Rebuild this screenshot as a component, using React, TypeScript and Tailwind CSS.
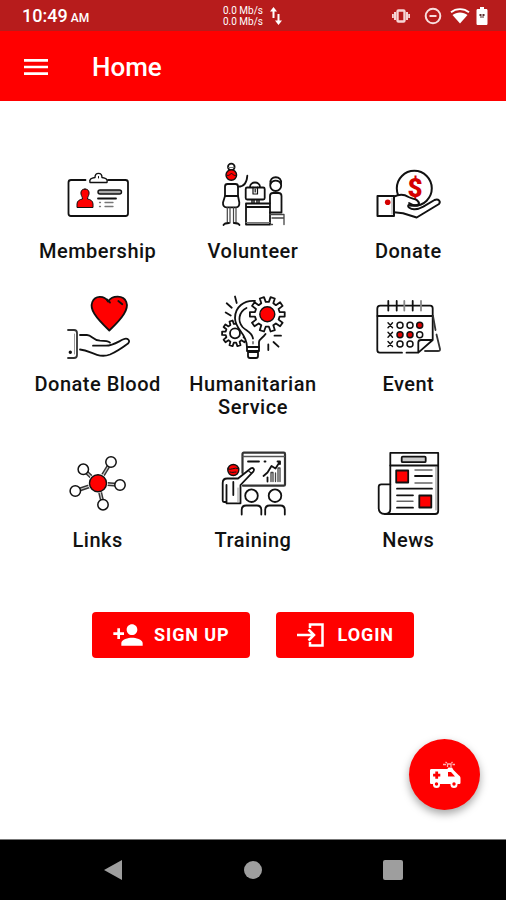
import type { ReactNode } from 'react';
import { MdMenu, MdPersonAdd } from 'react-icons/md';

const RED = '#ff0000';

function gearPath(cx: number, cy: number, outer: number, inner: number, teeth: number) {
  const step = (Math.PI * 2) / teeth;
  const points: string[] = [];
  for (let i = 0; i < teeth; i++) {
    const a = i * step;
    const corners = [
      [inner, -0.3],
      [outer, -0.2],
      [outer, 0.2],
      [inner, 0.3],
    ];
    for (const [r, k] of corners) {
      const x = cx + r * Math.cos(a + k * step);
      const y = cy + r * Math.sin(a + k * step);
      points.push(`${x.toFixed(1)} ${y.toFixed(1)}`);
    }
  }
  return `M${points.join('L')}Z`;
}

function Drawing({ children }: { children: ReactNode }) {
  return (
    <svg
      viewBox="0 0 70 70"
      className="size-[70px]"
      fill="none"
      stroke="#111"
      strokeWidth="1.8"
      strokeLinecap="round"
      strokeLinejoin="round"
      aria-hidden="true"
    >
      {children}
    </svg>
  );
}

function MembershipIcon() {
  return (
    <Drawing>
      <path d="M22.5 18H8a2.5 2.5 0 0 0-2.5 2.5v31A2.5 2.5 0 0 0 8 54h54.5a2.5 2.5 0 0 0 2.5-2.5v-31a2.5 2.5 0 0 0-2.5-2.5H45" />
      <path d="M27 20.5c-1-3 1-4.5 5-5 0-5.5 7-5.5 7 0 4 .5 6 2 5 5Z" strokeWidth="1.4" />
      <path d="M35.5 14.5v1.5" strokeWidth="1" />
      <path
        d="M22 27c3 0 4.5 2 4 5-.3 2-1.500 3-1.500 5 3 .5 5.500 2 5.500 5v3.500H14V42c0-3 2.500-4.500 5.500-5 0-2-1.200-3-1.500-5-.5-3 1-5 4-5Z"
        fill={RED}
        strokeWidth="1"
      />
      <rect x="35" y="28" width="23.5" height="4" rx="2" fill="#aaa" strokeWidth="1.4" />
      <path d="M35 36.5h18" />
      <path d="M36.5 40.5h1M42 40.5h8M36.5 44.5h1M42 44.5h8" stroke="#777" strokeWidth="1.3" />
    </Drawing>
  );
}

function VolunteerIcon() {
  return (
    <Drawing>
      <circle cx="13.3" cy="5" r="3.3" />
      <path d="M10.5 5.500h5.500" stroke="#777" strokeWidth="1" />
      <circle cx="13.3" cy="13" r="5.3" fill={RED} strokeWidth="1.4" />
      <path d="M9.5 13.5c2 .5 3-2 4-2s2 2.500 4 2" strokeWidth="1" />
      <path d="M7 34v-9.500c0-1.500 1-2.500 2.500-2.500h8c1.500 0 2.500 1 2.500 2.500V34" />
      <path d="M7 34h13l1.300 6.500c.2 3-.8 4.800-3.300 4.800H8.500c-2.500 0-3.700-1.800-3.500-4.800Z" />
      <path d="M9.3 45.5V61M12 45.5V61M15.5 45.5V61M18 45.5V61" stroke="#444" strokeWidth="1.2" />
      <path d="M5.5 63c1-1.800 2.500-2 5.500-2M21.5 63c-1-1.800-2.500-2-5.500-2" />
      <path d="M20.3 24.7c5 0 8.500-4 9-11" />
      <rect x="27.7" y="25.5" width="19" height="12" rx="1.5" />
      <path d="M32 25c0-6 10-6 10 0" />
      <path d="M35 25v7h4.500v-7M37.200 27v3" strokeWidth="1.2" />
      <path d="M34 38v3M36 38v3M39 38v3M41 38v3" strokeWidth="1.4" />
      <path d="M28 41.5h24V45H28zM28 45v17.500h24V45" />
      <path d="M28 60.5h24" stroke="#777" strokeWidth="1" />
      <circle cx="57.7" cy="23.5" r="5.5" />
      <path d="M52.5 22c-2-9 12.500-9 10.500 0-2-4.500-8.500-4.500-10.500 0Z" fill="#fff" />
      <path d="M52 41v-7c0-2 1-3 3-3h5.500c2 0 3 1 3 3v16.500H52" />
      <path d="M52 52.5h14v10M54 56h12M52.500 62.500h2" stroke="#444" strokeWidth="1.3" />
    </Drawing>
  );
}

function DonateIcon() {
  return (
    <Drawing>
      <circle cx="41.3" cy="26.3" r="17.5" strokeWidth="2" />
      <text
        x="42"
        y="35"
        textAnchor="middle"
        fontFamily="Roboto, sans-serif"
        fontSize="26"
        fontWeight="900"
        fill="#d50000"
        stroke="none"
      >
        $
      </text>
      <path
        d="M21 34.700c5-2.500 10-2.500 14.500.3 4.500 2.500 10.500 1.500 10.500 7.500-3 1.500-6 .5-10.500.5-1.500 2 2 4 5.500 4.300 3 .2 6-.8 9.300-2.600L61.500 38c4-1.800 6.500 1.500 4.500 4L43.700 55.500 30 51.300l-9-1"
        fill="#fff"
        strokeWidth="2"
      />
      <path d="M36 41c3 2 7 3.500 10.500 2" />
      <rect x="4.5" y="34" width="16.5" height="20" fill="#fff" strokeWidth="2" />
      <path d="M19 36v16" stroke="#999" strokeWidth="1" />
      <circle cx="14.7" cy="40.3" r="2.8" fill="#d50000" stroke="none" />
    </Drawing>
  );
}

function DonateBloodIcon() {
  return (
    <Drawing>
      <path
        d="M45 6.500C41 0 32 .5 29.300 7 26.500 14 32 22 46.300 35.500 60 22.500 66 14 63.300 7 60.500 0 49.500 0 45 6.500Z"
        fill={RED}
      />
      <path d="M44 4.5l3 3M55.300 6l4 3.300" />
      <path d="M5 35h6c2 0 3 1 3 3v22c0 2-1 3-3 3H5" stroke="#333" />
      <path d="M11.5 39v20" stroke="#999" strokeWidth="1" />
      <circle cx="7.3" cy="57.3" r=".8" fill="#111" />
      <path d="M17 40h7c5 0 6 5.500 13 5.700 4 0 8 0 10 2" />
      <path d="M30 50.7h13c7 0 12-4 17.500-6.500 4-1.800 7.500 1.300 4.500 4.300C59 53 53 57 47 59.500c-4 1.500-9 1.500-13 .3-6-1.800-10-4.800-17-5.300" />
    </Drawing>
  );
}

function HumanitarianIcon() {
  return (
    <Drawing>
      <path d={gearPath(17, 38.3, 13, 9.5, 10)} />
      <circle cx="17" cy="38.3" r="5" />
      <path
        d="M37 6C26 5 17 12 17 23c0 12 12 14 12 29h12v-6c0-3 4-4 6.500-8L49 19Z"
        fill="#fff"
        stroke="none"
      />
      <path d="M37 6C26 5 17 12 17 23c0 12 12 15 12 29M41 52v-5c0-3 4-4 6.500-8" />
      <path d="M28.500 13c-8 4-9 13-4 19 3.500 4 9 4 10.500 11.500" />
      <path d="M35 47v1.500" stroke="#777" />
      <path d={gearPath(49.3, 19.3, 17.5, 12.5, 10)} fill="#fff" />
      <circle cx="49.3" cy="19.3" r="7.5" fill={RED} strokeWidth="1.4" />
      <path d="M29 52h12v4H29zM30 57h10v4c0 1.300-.7 2-2 2h-6c-1.300 0-2-.7-2-2Z" />
      <path d="M7.700 17.500l5 3M8.700 8.300l5 4.400M17 1.500l1.700 6.500M56.500 40.700H63M55.500 47l5 4.700M50.300 49.500V55" />
    </Drawing>
  );
}

function EventIcon() {
  const columns = [27, 37, 46.7];
  const rows = [30.3, 39.7, 49];
  const marked = ['0-2', '1-0', '1-1'];
  return (
    <Drawing>
      <path d="M59.700 45V13.500c0-2-1-2.800-2.500-2.800H7.300c-2 0-3 1-3 3V55c0 2 .8 2.700 2.500 2.700H29M33.500 57.700h11.800L59.700 45H48c-2 0-2.700.7-2.700 2.500v10.200" />
      <path d="M4.500 21h55" />
      <path d="M15.300 6v9.500M23.700 6v9.500M39.700 6v9.500" />
      <path d="M31.300 6v9.500M48 6v9.500" stroke="#888" />
      <path d="M60 21l2.500 14M63.500 39.500L67 54c.2 1.500-.5 2-2 2H52" stroke="#333" />
      {rows.map((y, r) => (
        <g key={y}>
          <path d={`M15 ${y - 2.5}l4.500 5m0-5l-4.500 5`} strokeWidth="1.4" />
          {columns.map((x, c) => (
            <circle
              key={x}
              cx={x}
              cy={y}
              r={r === 2 && c === 2 ? 0 : 3}
              fill={marked.includes(`${r}-${c}`) ? '#e00000' : '#fff'}
              strokeWidth={r === 2 && c === 2 ? 0 : 1.5}
            />
          ))}
        </g>
      ))}
    </Drawing>
  );
}

function LinksIcon() {
  const nodes = [
    [20.3, 18.3],
    [48, 11],
    [57, 34],
    [40, 53.7],
    [12.3, 40],
  ];
  return (
    <Drawing>
      {nodes.map(([x, y]) => (
        <g key={x}>
          <path d={`M35 32.3L${x} ${y}`} strokeWidth="4" stroke="#333" strokeLinecap="butt" />
          <path d={`M35 32.3L${x} ${y}`} strokeWidth="1.2" stroke="#ccc" strokeLinecap="butt" />
          <circle cx={x} cy={y} r="5.2" fill="#fff" strokeWidth="1.5" />
        </g>
      ))}
      <circle cx="35" cy="32.3" r="10" fill="#fff" stroke="none" />
      <circle cx="35" cy="32.3" r="8.5" fill={RED} strokeWidth="1.4" />
    </Drawing>
  );
}

function TrainingIcon() {
  return (
    <Drawing>
      <path d="M24.500 22V3c0-1 .5-1.300 1.300-1.300h40c.8 0 1.200.5 1.200 1.300v30.500c0 .8-.4 1.200-1.200 1.200H25" stroke="#333" strokeWidth="2.2" />
      <path d="M25 5.5h41.500" stroke="#555" strokeWidth="1.3" />
      <path d="M30 10.5h11M46.500 10.500h1" />
      <path d="M45.500 25l4-3.500L53.500 15l4 2.500L62 10.500M59.500 10.500H62V13" />
      <path d="M49.500 30.5v-4" />
      <path d="M53 30.5v-9h2v9M57.500 30.5V22M60 30.5V17h2v13.500" stroke="#444" strokeWidth="1.3" />
      <circle cx="15.3" cy="19" r="5.5" fill={RED} strokeWidth="1.4" />
      <path d="M10 18c3 1.500 6-2 10.500-.5M12 21c2 1 4 0 6 0" strokeWidth="1" />
      <path
        d="M8 51h-2c-1 0-1.300-.5-1.300-1.500V32c0-3 1.500-4.500 4.500-4.500H20L33 17.300c2-1 4 1 2.500 3L22.500 34v18.300H8.500V34"
        fill="#fff"
      />
      <path d="M15.300 31v13" />
      <path d="M31 20.500l2.500 1.500" strokeWidth="1.2" />
      <path d="M20 37v14" stroke="#999" strokeWidth="1" />
      {[33.5, 57].map((x) => (
        <g key={x}>
          <circle cx={x} cy="44.7" r="6.3" fill="#fff" />
          <path d={`M${x - 9.8} 63.500V59c0-3 1.500-4.500 4.500-4.500h10.600c3 0 4.500 1.500 4.500 4.500v4.500`} />
        </g>
      ))}
    </Drawing>
  );
}

function NewsIcon() {
  return (
    <Drawing>
      <path d="M17.300 1.800h47.900V60c0 2-1.200 3-3 3H12c4 0 5.300-2 5.300-5Z" />
      <path d="M17.300 33.300h-9c-1.800 0-2.600.8-2.600 2.500V57c0 4 2.500 6 6.300 6" />
      <path d="M63 16v43" stroke="#999" strokeWidth="1.2" />
      <path d="M17.300 14.500H65" />
      <rect x="28.7" y="5.7" width="24" height="5.5" rx="1" fill="#ccc" />
      <rect x="23.2" y="19.5" width="12" height="12" fill={RED} />
      <rect x="46.3" y="44.5" width="12" height="12" fill={RED} />
      <path d="M42 25h17M24 37.700h35M24 44.300h16M24 56.700h16" />
      <path d="M42 19h17M42 32h17M24 50.300h16" stroke="#666" strokeWidth="1.4" />
    </Drawing>
  );
}

function LoginIcon() {
  return (
    <svg viewBox="0 0 32 32" className="size-8" fill="none" stroke="currentColor" strokeWidth="2.5" aria-hidden="true">
      <path d="M14 9V5.500h12.500v21H14V23" />
      <path d="M1 16h17M12.500 10.500L18 16l-5.500 5.500" />
    </svg>
  );
}

function AmbulanceIcon() {
  return (
    <svg viewBox="0 0 32 28" className="h-7 w-8" fill="#fff" aria-hidden="true">
      <path d="M2.500 8h15.800l1.200-1.500h3.500l1.500 2.500 5.500 5.500c1 .5 1.500 1.500 1.500 3v4c0 1-.5 1.500-1.500 1.500H2.500C1.500 23 1 22.500 1 21.500v-12C1 8.500 1.500 8 2.500 8Z" />
      <path d="M6.300 10.500h2.800v2.200h2.200v2.800H9.100v2.200H6.300v-2.200H4.100v-2.800h2.200ZM19 11h3l4 4.500h-7Z" fill={RED} />
      <circle cx="7.5" cy="23.5" r="3.5" />
      <circle cx="25" cy="23.5" r="3.5" />
      <circle cx="7.5" cy="23" r="1.7" fill={RED} />
      <circle cx="25" cy="23" r="1.7" fill={RED} />
      <path d="M14 3.500h3M23.500 3.500h2.500M16.500 1l1.500 1M23.500 1l-1 1M18.500 6V3h3.500v3" stroke="#ffb3b3" strokeWidth="1.3" fill="none" />
    </svg>
  );
}

function StatusBar() {
  return (
    <div className="grid h-[31px] grid-cols-3 items-center bg-[#b71c1c] px-[18px] text-white">
      <div className="flex items-baseline gap-[3px] pl-1 font-medium">
        <span className="text-lg leading-6">10:49</span>
        <span className="text-xs">AM</span>
      </div>
      <div className="flex items-center justify-center gap-1.5">
        <div className="text-[10px] leading-[11px]">
          <p>0.0 Mb/s</p>
          <p>0.0 Mb/s</p>
        </div>
        <svg viewBox="0 0 14 20" className="h-5 w-3.5" fill="none" stroke="#fff" strokeWidth="2" aria-hidden="true">
          <path d="M4.500 12V3M9.500 8v9" />
          <path d="M4.500 1L1 5.500h7zM9.500 19L6 14.500h7z" fill="#fff" stroke="none" />
        </svg>
      </div>
      <div className="flex items-center justify-end">
        <svg viewBox="0 0 18 18" className="mr-3.5 size-[18px]" fill="none" stroke="#f6d5d5" strokeWidth="2" aria-hidden="true">
          <rect x="5.5" y="3.5" width="7" height="11" rx="1" strokeWidth="2.4" />
          <path d="M3 5v8M.8 7v4M15 5v8M17.200 7v4" />
        </svg>
        <svg viewBox="0 0 18 18" className="mr-2 size-[18px]" fill="none" stroke="#f8dede" strokeWidth="2" aria-hidden="true">
          <circle cx="9" cy="9" r="7.3" />
          <path d="M5.500 9h7" />
        </svg>
        <svg viewBox="0 0 20 18" className="mr-1.5 h-[18px] w-5" fill="#fff" aria-hidden="true">
          <path d="M10 16.500L2.500 8c4-3.500 11-3.500 15 0Z" />
          <path d="M1 5.200c5-4.200 13-4.200 18 0" fill="none" stroke="#fff" strokeWidth="1.8" />
        </svg>
        <svg viewBox="0 0 12 18" className="h-[18px] w-3" fill="#fff" aria-hidden="true">
          <path d="M4 0h4v2h2c1 0 1.500.5 1.500 1.500v13c0 1-.5 1.500-1.500 1.500H2c-1 0-1.500-.5-1.500-1.500v-13C.5 2.500 1 2 2 2h2Z" />
          <path d="M3.500 7h2v4h-1V9h-1ZM6.500 7h2v2h-1v2h-1Z" fill="#5a2b2b" />
        </svg>
      </div>
    </div>
  );
}

const items = [
  { label: 'Membership', icon: <MembershipIcon /> },
  { label: 'Volunteer', icon: <VolunteerIcon /> },
  { label: 'Donate', icon: <DonateIcon /> },
  { label: 'Donate Blood', icon: <DonateBloodIcon /> },
  { label: 'Humanitarian Service', icon: <HumanitarianIcon /> },
  { label: 'Event', icon: <EventIcon /> },
  { label: 'Links', icon: <LinksIcon /> },
  { label: 'Training', icon: <TrainingIcon /> },
  { label: 'News', icon: <NewsIcon /> },
];

export default function App() {
  return (
    <div className="flex min-h-screen flex-col bg-white font-['Roboto',sans-serif]">
      <StatusBar />
      <header className="flex h-[70px] items-center gap-10 bg-[#ff0000] px-5 pt-0.5 text-white">
        <button type="button" aria-label="Open menu">
          <MdMenu className="size-8" />
        </button>
        <h1 className="text-[26px] leading-8 font-medium">Home</h1>
      </header>

      <main className="flex flex-1 flex-col">
        <nav className="grid grid-cols-3 gap-y-8 px-5 pt-[61px]">
          {items.map((item) => (
            <a key={item.label} href="#" className="flex flex-col items-center gap-2">
              {item.icon}
              <span className="text-center text-xl leading-[23px] font-medium tracking-wide text-[#111]">
                {item.label}
              </span>
            </a>
          ))}
        </nav>

        <div className="mt-[60px] flex justify-center gap-[26px]">
          <button
            type="button"
            className="flex h-[46px] items-center gap-2.5 rounded bg-[#ff0000] px-5 text-lg font-bold tracking-wider text-white"
          >
            <MdPersonAdd className="size-8" />
            SIGN UP
          </button>
          <button
            type="button"
            className="flex h-[46px] items-center gap-2.5 rounded bg-[#ff0000] px-5 text-lg font-bold tracking-wider text-white"
          >
            <LoginIcon />
            LOGIN
          </button>
        </div>

        <button
          type="button"
          aria-label="Call ambulance"
          className="mt-auto mr-[26px] mb-[29px] flex size-[71px] items-center justify-center self-end rounded-full bg-[#ff0000] shadow-[0_4px_8px_rgba(0,0,0,0.35)]"
        >
          <AmbulanceIcon />
        </button>
      </main>

      <footer className="flex h-[61px] items-center justify-center gap-[120px] border-t border-[#777] bg-black">
        <button type="button" aria-label="Back">
          <svg viewBox="0 0 20 22" className="h-[22px] w-5" fill="#9e9e9e">
            <path d="M1 11L19 1v20Z" />
          </svg>
        </button>
        <button type="button" aria-label="Home" className="m-px size-[18px] rounded-full bg-[#9e9e9e]" />
        <button type="button" aria-label="Recent apps" className="size-5 rounded-xs bg-[#9e9e9e]" />
      </footer>
    </div>
  );
}
